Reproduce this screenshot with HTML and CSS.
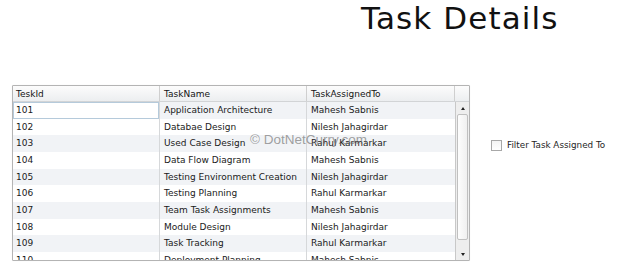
FILE: index.html
```html
<!DOCTYPE html>
<html>
<head>
<meta charset="utf-8">
<link rel="stylesheet" href="styles.css">
</head>
<body>
<header class="title-bar"><h1 class="title">Task Details</h1></header>
<main class="content">
  <div class="grid">
    <div class="grid-head">
      <div class="hcell">TeskId</div>
      <div class="hcell">TaskName</div>
      <div class="hcell">TaskAssignedTo</div>
      <div class="hcell hcell-corner"></div>
    </div>
    <div class="grid-body">
      <div class="rows">
        <div class="row alt"><div class="cell current">101</div><div class="cell">Application Architecture</div><div class="cell">Mahesh Sabnis</div></div>
        <div class="row"><div class="cell">102</div><div class="cell">Databae Design</div><div class="cell">Nilesh Jahagirdar</div></div>
        <div class="row alt"><div class="cell">103</div><div class="cell">Used Case Design</div><div class="cell">Rahul Karmarkar</div></div>
        <div class="row"><div class="cell">104</div><div class="cell">Data Flow Diagram</div><div class="cell">Mahesh Sabnis</div></div>
        <div class="row alt"><div class="cell">105</div><div class="cell">Testing Environment Creation</div><div class="cell">Nilesh Jahagirdar</div></div>
        <div class="row"><div class="cell">106</div><div class="cell">Testing Planning</div><div class="cell">Rahul Karmarkar</div></div>
        <div class="row alt"><div class="cell">107</div><div class="cell">Team Task Assignments</div><div class="cell">Mahesh Sabnis</div></div>
        <div class="row"><div class="cell">108</div><div class="cell">Module Design</div><div class="cell">Nilesh Jahagirdar</div></div>
        <div class="row alt"><div class="cell">109</div><div class="cell">Task Tracking</div><div class="cell">Rahul Karmarkar</div></div>
        <div class="row"><div class="cell">110</div><div class="cell">Deployment Planning</div><div class="cell">Mahesh Sabnis</div></div>
      </div>
      <div class="scrollbar">
        <div class="sb-btn"><span class="arrow-up"></span></div>
        <div class="sb-thumb"></div>
        <div class="sb-btn sb-btn-down"><span class="arrow-down"></span></div>
      </div>
    </div>
  </div>
  <label class="filter"><span class="checkbox"></span><span class="filter-text">Filter Task Assigned To</span></label>
</main>
<div class="watermark">© DotNetCurry.com</div>
</body>
</html>
```
FILE: styles.css
```css
html, body {
  margin: 0;
  padding: 0;
  background: #ffffff;
  width: 624px;
  height: 278px;
  overflow: hidden;
  font-family: "DejaVu Sans", Verdana, sans-serif;
  color: #222;
}

.title-bar {
  padding: 0 0 0 361px;
  height: 36px;
}

.title {
  margin: 0;
  font-family: "DejaVu Sans", Verdana, sans-serif;
  font-weight: normal;
  font-size: 31px;
  letter-spacing: 1.1px;
  line-height: normal;
  color: #111;
}

.content {
  display: flex;
  align-items: flex-start;
  padding: 49px 0 0 12px;
}

.grid {
  width: 456px;
  border: 1px solid #b4b4b4;
  border-radius: 1px;
  box-shadow: 0 0 1px rgba(0,0,0,0.08);
  background: #fff;
}

.grid-head {
  display: grid;
  grid-template-columns: 147px 147px 148px 14px;
  height: 16px;
  background: linear-gradient(#fcfcfc, #eceef0);
  border-bottom: 1px solid #d2d4d6;
  box-sizing: border-box;
}

.hcell {
  font-size: 9px;
  line-height: 16px;
  padding-left: 3px;
  border-right: 1px solid #cfcfcf;
  color: #141414;
  overflow: hidden;
  white-space: nowrap;
}

.hcell:nth-child(2), .hcell:nth-child(3) {
  padding-left: 4px;
}

.hcell-corner {
  border-right: none;
  padding: 0;
}

.grid-body {
  display: flex;
  height: 158px;
}

.rows {
  width: 442px;
  overflow: hidden;
}

.row {
  display: grid;
  grid-template-columns: 147px 147px 148px;
  height: 16.67px;
  background: #ffffff;
}

.row.alt {
  background: #f1f3f6;
}

.cell {
  font-size: 9px;
  line-height: 16.67px;
  padding-left: 3px;
  border-right: 1px solid #d6d8da;
  color: #1a1a1a;
  white-space: nowrap;
  overflow: hidden;
}

.cell:nth-child(2), .cell:nth-child(3) {
  padding-left: 4px;
}

.cell:nth-child(3) {
  border-right: none;
}

.cell.current {
  background: #ffffff;
  box-shadow: inset 0 0 0 1px #b5cadb;
}

.scrollbar {
  width: 14px;
  box-sizing: border-box;
  border-left: 1px solid #c8c8c8;
  background: #eeeeee;
  display: flex;
  flex-direction: column;
}

.sb-btn {
  height: 12px;
  display: flex;
  align-items: center;
  justify-content: center;
}

.sb-btn-down {
  height: 20px;
  align-items: flex-end;
  padding-bottom: 4px;
  box-sizing: border-box;
}

.arrow-up {
  width: 0;
  height: 0;
  border-left: 2.5px solid transparent;
  border-right: 2.5px solid transparent;
  border-bottom: 3px solid #222;
}

.arrow-down {
  width: 0;
  height: 0;
  border-left: 2.5px solid transparent;
  border-right: 2.5px solid transparent;
  border-top: 3px solid #222;
}

.sb-thumb {
  flex: 1;
  margin: 0 1px;
  border: 1px solid #c0c0c0;
  border-radius: 2px;
  background: linear-gradient(90deg, #fdfdfd, #f0f0f0);
}

.filter {
  display: flex;
  align-items: center;
  margin: 54px 0 0 21px;
}

.checkbox {
  width: 11px;
  height: 11px;
  box-sizing: border-box;
  border: 1px solid #a8a8a8;
  background: linear-gradient(#f4f4f4, #ffffff);
  margin-right: 5px;
}

.filter-text {
  font-size: 8.8px;
  line-height: 12px;
  color: #1e1e1e;
  white-space: nowrap;
}

.watermark {
  position: absolute;
  left: 250px;
  top: 132px;
  font-family: "Liberation Sans", Arial, sans-serif;
  font-size: 13.5px;
  color: rgba(110, 110, 110, 0.65);
  white-space: nowrap;
  pointer-events: none;
}
```
